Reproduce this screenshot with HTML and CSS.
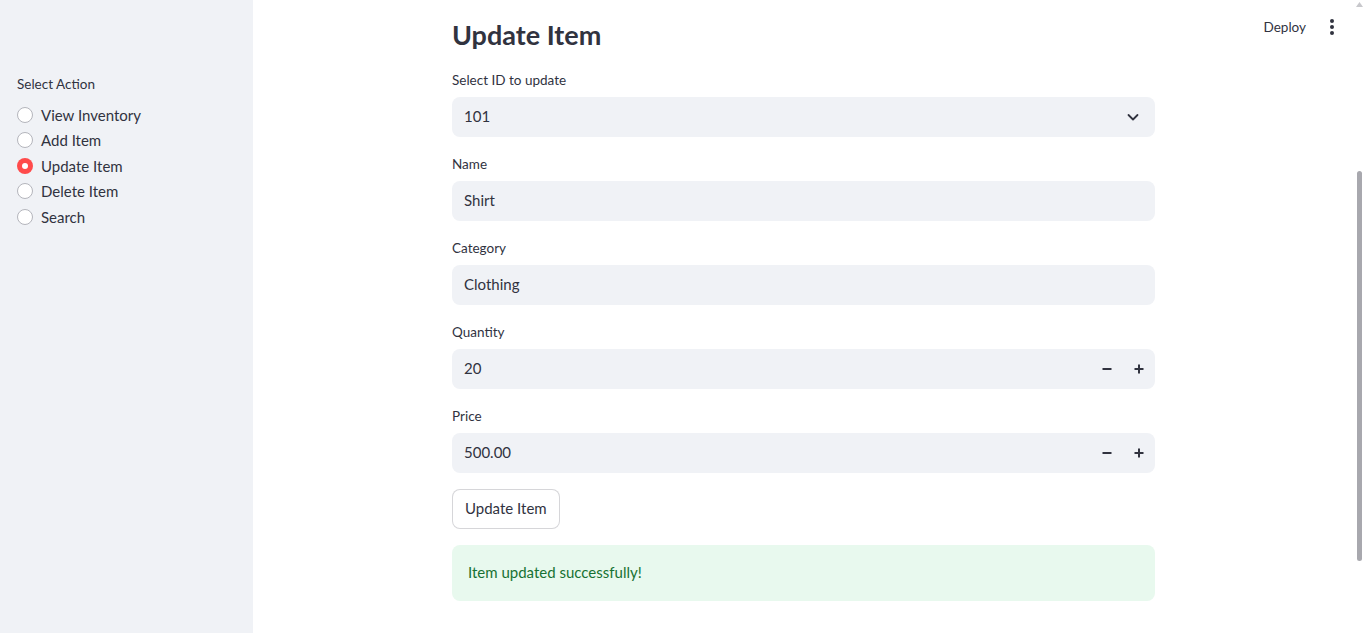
FILE: index.html
```html
<!DOCTYPE html>
<html>
<head>
<meta charset="utf-8">
<link rel="stylesheet" href="styles.css">
</head>
<body>
<aside class="sidebar">
  <div class="radio-label">Select Action</div>
  <div class="radio-group">
    <div class="radio"><span class="dot"></span>View Inventory</div>
    <div class="radio"><span class="dot"></span>Add Item</div>
    <div class="radio checked"><span class="dot"></span>Update Item</div>
    <div class="radio"><span class="dot"></span>Delete Item</div>
    <div class="radio"><span class="dot"></span>Search</div>
  </div>
</aside>
<main class="main">
  <header class="toolbar">
    <span class="deploy">Deploy</span>
    <span class="kebab"><i></i><i></i><i></i></span>
  </header>
  <div class="content">
    <h1 class="title">Update Item</h1>
    <div class="field">
      <label class="label">Select ID to update</label>
      <div class="box select"><span>101</span>
        <svg width="16" height="16" viewBox="0 0 16 16"><path d="M3.5 6 L8 10.5 L12.5 6" fill="none" stroke="#31333f" stroke-width="1.8" stroke-linecap="round" stroke-linejoin="round"/></svg>
      </div>
    </div>
    <div class="field">
      <label class="label">Name</label>
      <div class="box"><span>Shirt</span></div>
    </div>
    <div class="field">
      <label class="label">Category</label>
      <div class="box"><span>Clothing</span></div>
    </div>
    <div class="field">
      <label class="label">Quantity</label>
      <div class="box number"><span>20</span>
        <div class="steps">
          <svg width="32" height="40" viewBox="0 0 32 40"><path d="M11.5 20 H20.5" stroke="#31333f" stroke-width="2"/></svg>
          <svg width="32" height="40" viewBox="0 0 32 40"><path d="M11.5 20 H20.5 M16 15.5 V24.5" stroke="#31333f" stroke-width="2"/></svg>
        </div>
      </div>
    </div>
    <div class="field">
      <label class="label">Price</label>
      <div class="box number"><span>500.00</span>
        <div class="steps">
          <svg width="32" height="40" viewBox="0 0 32 40"><path d="M11.5 20 H20.5" stroke="#31333f" stroke-width="2"/></svg>
          <svg width="32" height="40" viewBox="0 0 32 40"><path d="M11.5 20 H20.5 M16 15.5 V24.5" stroke="#31333f" stroke-width="2"/></svg>
        </div>
      </div>
    </div>
    <button class="btn">Update Item</button>
    <div class="success">Item updated successfully!</div>
  </div>
  <div class="scrollbar">
    <svg class="arrow" width="7" height="5" viewBox="0 0 7 5"><path d="M0 5 L3.5 0 L7 5 Z" fill="#c8c8cc"/></svg>
    <div class="thumb"></div>
  </div>
</main>
</body>
</html>
```
FILE: styles.css
```css
* { box-sizing: border-box; }
html, body { margin: 0; padding: 0; height: 633px; overflow: hidden; }
body {
  display: flex;
  font-family: "Source Sans Pro", Lato, "Noto Sans", sans-serif;
  color: #31333f;
  background: #ffffff;
}
.sidebar {
  width: 253px;
  flex: none;
  background: #f0f2f6;
  padding: 74px 17px 0 17px;
}
.radio-label {
  font-size: 13.5px;
  line-height: 20px;
  margin-bottom: 8px;
}
.radio-group { display: flex; flex-direction: column; }
.radio {
  display: flex;
  align-items: center;
  height: 25.5px;
  font-size: 15px;
  gap: 8px;
}
.dot {
  width: 16px;
  height: 16px;
  border-radius: 50%;
  background: #fff;
  border: 1px solid #b4b5bc;
  flex: none;
  position: relative;
}
.radio.checked .dot {
  background: #ff4b4b;
  border: none;
}
.radio.checked .dot::after {
  content: "";
  position: absolute;
  left: 5px; top: 5px;
  width: 6px; height: 6px;
  border-radius: 50%;
  background: #fff;
}
.main {
  flex: 1;
  position: relative;
  display: flex;
  justify-content: center;
  padding-right: 9px;
}
.toolbar {
  position: absolute;
  top: 0; right: 0;
  height: 53px;
  display: flex;
  align-items: center;
  padding-right: 24px;
  gap: 19px;
}
.deploy { font-size: 13.5px; color: #31333f; }
.kebab { display: flex; flex-direction: column; gap: 2px; width: 14px; align-items: center; }
.kebab i { display: block; width: 4px; height: 4px; border-radius: 50%; background: #31333f; }
.content {
  width: 703px;
  padding-top: 14px;
}
.title {
  font-size: 27px;
  font-weight: 700;
  line-height: 42px;
  margin: 0 0 14px 0;
}
.field { margin-bottom: 17px; }
.label {
  display: block;
  font-size: 13.5px;
  line-height: 20px;
  margin-bottom: 7px;
}
.box {
  height: 40px;
  background: #f0f2f6;
  border-radius: 8px;
  display: flex;
  align-items: center;
  justify-content: space-between;
  padding: 0 12px;
  font-size: 15px;
}
.box > span { padding-bottom: 2px; }
.box.select { padding-right: 14px; }
.box.number { padding-right: 0; }
.steps { display: flex; }
.steps svg { display: block; }
.btn {
  display: block;
  font-family: inherit;
  font-size: 15px;
  color: #31333f;
  background: #fff;
  border: 1px solid rgba(49, 51, 63, 0.2);
  border-radius: 8px;
  height: 40px;
  padding: 0 12px 2px;
  margin-top: -1px;
  margin-bottom: 16px;
}
.success {
  height: 56px;
  background: #e8f9ee;
  color: #177233;
  border-radius: 8px;
  padding: 0 16px 2px;
  display: flex;
  align-items: center;
  font-size: 15px;
}
.scrollbar {
  position: absolute;
  top: 0; right: 0;
  width: 8px;
  height: 633px;
}
.arrow { position: absolute; top: 2px; left: 1px; }
.thumb {
  position: absolute;
  top: 171px;
  left: 2px;
  width: 5px;
  height: 390px;
  border-radius: 3px;
  background: #a8a8ae;
}
```
